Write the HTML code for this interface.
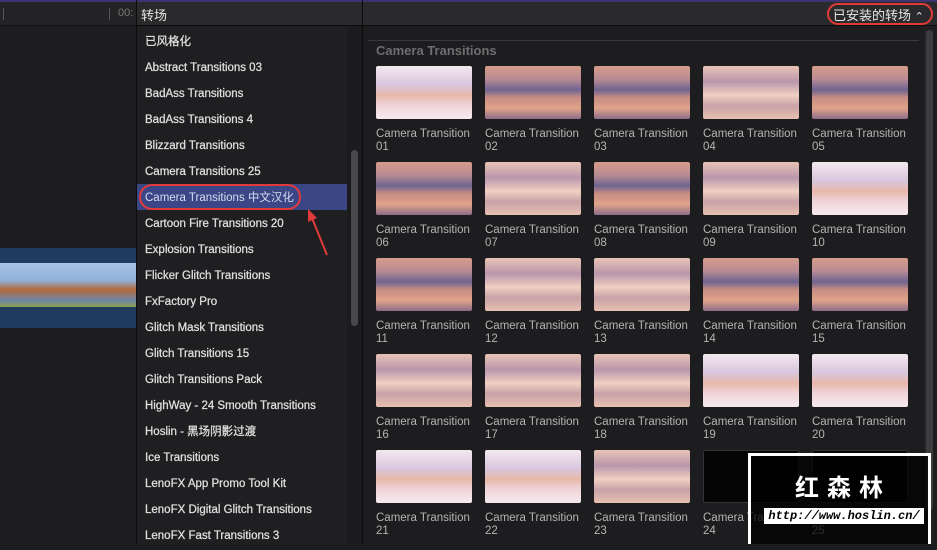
<!DOCTYPE html><html><head><meta charset="utf-8"><style>
*{margin:0;padding:0;box-sizing:border-box}
body{width:937px;height:544px;overflow:hidden;background:#1d1d1f;font-family:"Liberation Sans","Noto Sans CJK SC",sans-serif;position:relative}
.a{position:absolute}
.row{position:absolute;left:137px;width:210px;height:26px;color:#e0e0e0;font-size:11.5px;line-height:28px;padding-left:8px;-webkit-text-stroke:0.25px #e0e0e0}
.th{position:absolute;width:96px;height:53px;border-radius:2px}
.lb{position:absolute;width:108px;color:#b4b4b4;font-size:11.5px;line-height:13px}
.A{background:linear-gradient(180deg,#f4e8f0 0%,#d9c6de 35%,#e8b8aa 55%,#efd6da 75%,#f6e9ee 100%)}
.B{background:linear-gradient(180deg,#d59c88 0%,#b88a95 25%,#6f6591 45%,#c98d84 60%,#e0a38a 80%,#8d6d8a 100%)}
.C{background:linear-gradient(180deg,#e9c3b4 0%,#b996ac 30%,#f0d0c2 55%,#c9a2a8 75%,#e8c0b0 100%)}
.K{background:#050505;border:1px solid #333}
</style></head><body>
<div class="a" style="left:0;top:0;width:937px;height:2px;background:#3b3470"></div>
<div class="a" style="left:0;top:2px;width:136px;height:24px;background:#232325;border-bottom:1px solid #111"></div>
<div class="a" style="left:3px;top:8px;width:1px;height:12px;background:#555"></div>
<div class="a" style="left:109px;top:8px;width:1px;height:12px;background:#555"></div>
<div class="a" style="left:118px;top:7px;color:#777;font-size:11px">00:</div>
<div class="a" style="left:0;top:248px;width:136px;height:80px;background:#1f3b5e"></div>
<div class="a" style="left:0;top:263px;width:136px;height:44px;background:linear-gradient(180deg,#a9c4e4,#8fb0d8 40%,#b56a3a 60%,#6d86a8 85%,#8aa04a);"></div>
<div class="a" style="left:136px;top:0;width:1px;height:544px;background:#0c0c0c"></div>
<div class="a" style="left:137px;top:2px;width:225px;height:24px;background:#2a2a2c;border-bottom:1px solid #0c0c0c"></div>
<div class="a" style="left:141px;top:5px;color:#e6e6e6;font-size:13px">转场</div>
<div class="a" style="left:137px;top:27px;width:225px;height:517px;background:#1f1f21"></div>
<div class="row" style="top:28px">已风格化</div>
<div class="row" style="top:54px">Abstract Transitions 03</div>
<div class="row" style="top:80px">BadAss Transitions</div>
<div class="row" style="top:106px">BadAss Transitions 4</div>
<div class="row" style="top:132px">Blizzard Transitions</div>
<div class="row" style="top:158px">Camera Transitions 25</div>
<div class="row" style="top:184px;background:#3a4686;color:#d8dcf0;-webkit-text-stroke:0">Camera Transitions 中文汉化</div>
<div class="row" style="top:210px">Cartoon Fire Transitions 20</div>
<div class="row" style="top:236px">Explosion Transitions</div>
<div class="row" style="top:262px">Flicker Glitch Transitions</div>
<div class="row" style="top:288px">FxFactory Pro</div>
<div class="row" style="top:314px">Glitch Mask Transitions</div>
<div class="row" style="top:340px">Glitch Transitions 15</div>
<div class="row" style="top:366px">Glitch Transitions Pack</div>
<div class="row" style="top:392px">HighWay - 24 Smooth Transitions</div>
<div class="row" style="top:418px">Hoslin - 黑场阴影过渡</div>
<div class="row" style="top:444px">Ice Transitions</div>
<div class="row" style="top:470px">LenoFX App Promo Tool Kit</div>
<div class="row" style="top:496px">LenoFX Digital Glitch Transitions</div>
<div class="row" style="top:522px">LenoFX Fast Transitions 3</div>
<div class="a" style="left:139px;top:184px;width:162px;height:26px;border:2px solid #e03a3a;border-radius:13px"></div>
<svg class="a" style="left:300px;top:205px" width="40" height="55"><line x1="27" y1="50" x2="12" y2="13" stroke="#e03a3a" stroke-width="2"/><polygon points="8,4 8,17 17,13" fill="#e03a3a"/></svg>
<div class="a" style="left:347px;top:27px;width:15px;height:517px;background:#1b1b1d"></div>
<div class="a" style="left:351px;top:150px;width:7px;height:176px;background:#48484a;border-radius:4px"></div>
<div class="a" style="left:362px;top:0;width:1px;height:544px;background:#0c0c0c"></div>
<div class="a" style="left:363px;top:2px;width:574px;height:24px;background:#2a2a2c;border-bottom:1px solid #0c0c0c"></div>
<div class="a" style="left:833px;top:5px;color:#e6e6e6;font-size:13px">已安装的转场 <span style="font-size:11px">⌃</span></div>
<div class="a" style="left:827px;top:3px;width:106px;height:22px;border:2px solid #e03a3a;border-radius:11px"></div>
<div class="a" style="left:363px;top:27px;width:574px;height:517px;background:#1d1d1f"></div>
<div class="a" style="left:368px;top:40px;width:551px;height:1px;background:#3a3a3c"></div>
<div class="a" style="left:376px;top:43px;color:#6e6e70;font-size:13px;font-weight:bold">Camera Transitions</div>
<div class="a" style="left:924px;top:30px;width:9px;height:514px;background:#232325"></div>
<div class="a" style="left:926px;top:30px;width:7px;height:480px;background:#3c3c3e;border-radius:4px"></div>

<div class="th A" style="left:376px;top:66px"></div><div class="th B" style="left:485px;top:66px"></div><div class="th B" style="left:594px;top:66px"></div><div class="th C" style="left:703px;top:66px"></div><div class="th B" style="left:812px;top:66px"></div>
<div class="th B" style="left:376px;top:162px"></div><div class="th C" style="left:485px;top:162px"></div><div class="th B" style="left:594px;top:162px"></div><div class="th C" style="left:703px;top:162px"></div><div class="th A" style="left:812px;top:162px"></div>
<div class="th B" style="left:376px;top:258px"></div><div class="th C" style="left:485px;top:258px"></div><div class="th C" style="left:594px;top:258px"></div><div class="th B" style="left:703px;top:258px"></div><div class="th B" style="left:812px;top:258px"></div>
<div class="th C" style="left:376px;top:354px"></div><div class="th C" style="left:485px;top:354px"></div><div class="th C" style="left:594px;top:354px"></div><div class="th A" style="left:703px;top:354px"></div><div class="th A" style="left:812px;top:354px"></div>
<div class="th A" style="left:376px;top:450px"></div><div class="th A" style="left:485px;top:450px"></div><div class="th C" style="left:594px;top:450px"></div><div class="th K" style="left:703px;top:450px"></div><div class="th K" style="left:812px;top:450px"></div>

<div class="lb" style="left:376px;top:128px">Camera Transition<br>01</div><div class="lb" style="left:485px;top:128px">Camera Transition<br>02</div><div class="lb" style="left:594px;top:128px">Camera Transition<br>03</div><div class="lb" style="left:703px;top:128px">Camera Transition<br>04</div><div class="lb" style="left:812px;top:128px">Camera Transition<br>05</div>
<div class="lb" style="left:376px;top:224px">Camera Transition<br>06</div><div class="lb" style="left:485px;top:224px">Camera Transition<br>07</div><div class="lb" style="left:594px;top:224px">Camera Transition<br>08</div><div class="lb" style="left:703px;top:224px">Camera Transition<br>09</div><div class="lb" style="left:812px;top:224px">Camera Transition<br>10</div>
<div class="lb" style="left:376px;top:320px">Camera Transition<br>11</div><div class="lb" style="left:485px;top:320px">Camera Transition<br>12</div><div class="lb" style="left:594px;top:320px">Camera Transition<br>13</div><div class="lb" style="left:703px;top:320px">Camera Transition<br>14</div><div class="lb" style="left:812px;top:320px">Camera Transition<br>15</div>
<div class="lb" style="left:376px;top:416px">Camera Transition<br>16</div><div class="lb" style="left:485px;top:416px">Camera Transition<br>17</div><div class="lb" style="left:594px;top:416px">Camera Transition<br>18</div><div class="lb" style="left:703px;top:416px">Camera Transition<br>19</div><div class="lb" style="left:812px;top:416px">Camera Transition<br>20</div>
<div class="lb" style="left:376px;top:512px">Camera Transition<br>21</div><div class="lb" style="left:485px;top:512px">Camera Transition<br>22</div><div class="lb" style="left:594px;top:512px">Camera Transition<br>23</div><div class="lb" style="left:703px;top:512px">Camera Transition<br>24</div><div class="lb" style="left:812px;top:512px">Camera Transition<br>25</div>

<div class="a" style="left:748px;top:453px;width:183px;height:91px;border:3px solid #fff;border-bottom:none;background:rgba(0,0,0,0.75)"></div>
<div class="a" style="left:795px;top:468px;color:#fff;font-size:24px;font-weight:bold;letter-spacing:8px">红森林</div>
<div class="a" style="left:764px;top:508px;width:160px;height:16px;background:#fff;color:#000;font-family:'Liberation Mono',monospace;font-style:italic;font-weight:bold;font-size:12px;line-height:16px;text-align:center">http://www.hoslin.cn/</div>
</body></html>
